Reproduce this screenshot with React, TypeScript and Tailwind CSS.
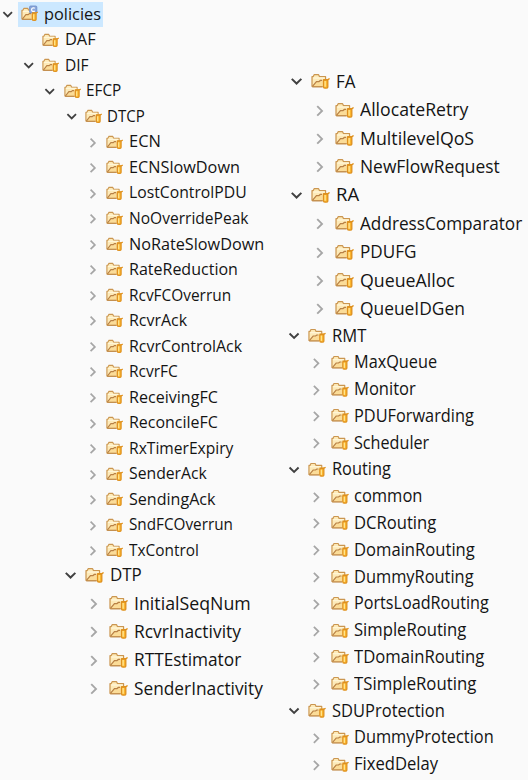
import { useLayoutEffect, useRef, useState } from "react";

type Kind = "open" | "closed" | "none";
type Item = { name: string; level: number; kind: Kind; ink: number };

const n = (name: string, level: number, kind: Kind, ink: number): Item => ({ name, level, kind, ink });

const efcp: Item[] = [
  n("policies", 0, "open", 56),
  n("DAF", 1, "none", 30),
  n("DIF", 1, "open", 23),
  n("EFCP", 2, "open", 34.3),
  n("DTCP", 3, "open", 36.7),
  n("ECN", 4, "closed", 29.3),
  n("ECNSlowDown", 4, "closed", 108.7),
  n("LostControlPDU", 4, "closed", 115.5),
  n("NoOverridePeak", 4, "closed", 118.7),
  n("NoRateSlowDown", 4, "closed", 133),
  n("RateReduction", 4, "closed", 106.7),
  n("RcvFCOverrun", 4, "closed", 100),
  n("RcvrAck", 4, "closed", 57.3),
  n("RcvrControlAck", 4, "closed", 112.3),
  n("RcvrFC", 4, "closed", 48.3),
  n("ReceivingFC", 4, "closed", 88.3),
  n("ReconcileFC", 4, "closed", 88.3),
  n("RxTimerExpiry", 4, "closed", 104),
  n("SenderAck", 4, "closed", 78),
  n("SendingAck", 4, "closed", 86.7),
  n("SndFCOverrun", 4, "closed", 102.7),
  n("TxControl", 4, "closed", 68.7),
];

const dtp: Item[] = [
  n("DTP", 0, "open", 30.7),
  n("InitialSeqNum", 1, "closed", 114.7),
  n("RcvrInactivity", 1, "closed", 106.7),
  n("RTTEstimator", 1, "closed", 106.7),
  n("SenderInactivity", 1, "closed", 129.5),
];

const allocation: Item[] = [
  n("FA", 0, "open", 18.7),
  n("AllocateRetry", 1, "closed", 109),
  n("MultilevelQoS", 1, "closed", 113),
  n("NewFlowRequest", 1, "closed", 139.3),
  n("RA", 0, "open", 22.3),
  n("AddressComparator", 1, "closed", 162.7),
  n("PDUFG", 1, "closed", 55),
  n("QueueAlloc", 1, "closed", 94),
  n("QueueIDGen", 1, "closed", 102.7),
];

const relaying: Item[] = [
  n("RMT", 0, "open", 33.7),
  n("MaxQueue", 1, "closed", 81.3),
  n("Monitor", 1, "closed", 60.7),
  n("PDUForwarding", 1, "closed", 119.3),
  n("Scheduler", 1, "closed", 75),
  n("Routing", 0, "open", 58.3),
  n("common", 1, "closed", 67.7),
  n("DCRouting", 1, "closed", 81.7),
  n("DomainRouting", 1, "closed", 120.3),
  n("DummyRouting", 1, "closed", 119),
  n("PortsLoadRouting", 1, "closed", 134.3),
  n("SimpleRouting", 1, "closed", 112.7),
  n("TDomainRouting", 1, "closed", 130.7),
  n("TSimpleRouting", 1, "closed", 122.7),
  n("SDUProtection", 0, "open", 112),
  n("DummyProtection", 1, "closed", 138),
  n("FixedDelay", 1, "closed", 83.3),
];

function Chevron({ kind }: { kind: Kind }) {
  return (
    <svg viewBox="0 0 16 16" className="h-[1em] w-[1em] shrink-0" fill="none">
      {kind === "open" && <path d="M3.4 6.2 7.7 10.4l4.3-4.2" stroke="#404040" strokeWidth="1.8" />}
      {kind === "closed" && <path d="M5.6 4.6 9.9 8.9 5.6 13.2" stroke="#a6a6a6" strokeWidth="1.7" />}
    </svg>
  );
}

function Folder({ source }: { source: boolean }) {
  return (
    <svg viewBox="0 0 17 16" className="h-[1em] w-[1.0625em] shrink-0 overflow-visible" fill="none">
      <path
        d="M.9 12.9V4.2h1l.9-1.8h4l.9 1.8h5.4v8.7z"
        fill="#fdeab8"
        stroke="#cb9650"
        strokeWidth="1.1"
        strokeLinejoin="round"
      />
      <path d="M2 5.4h10.4" stroke="#fff6d8" strokeWidth="1.2" />
      <path d="M1.5 13.2 4.9 8.6h2.3l1.2-1h4.8v5.6z" fill="#fbdc98" />
      <path d="M1.5 12.8 4.9 8.6h2.3l1.2-1h1.6" stroke="#b98145" strokeWidth="1.1" />
      <path d="M1.1 13.3h9.4" stroke="#c08a48" strokeWidth="1.2" />
      {source && (
        <g>
          <rect x="8.6" y="0" width="7.2" height="7" rx="1" fill="#8ba7da" stroke="#6a89c4" strokeWidth=".8" />
          <path d="M13.8 2.3c-1.4-.9-3.2-.4-3.2 1.4s1.8 2.2 3.2 1.3" stroke="#fff" strokeWidth="1.2" />
        </g>
      )}
      <path
        d="M11 6.9h4.3l1.4-1M11.3 7.2v6.4c0 1.2 3.8 1.2 3.8 0V7.2z"
        fill="#fbb52c"
        stroke="#de901f"
        strokeWidth="1.2"
        strokeLinejoin="round"
      />
      <path d="M12.7 8.2v5" stroke="#ffe48e" strokeWidth="1.3" />
    </svg>
  );
}

/* Condenses the label so that its drawn glyphs span exactly `ink` pixels. */
function Label({ text, ink }: { text: string; ink: number }) {
  const ref = useRef<HTMLSpanElement>(null);
  const [transform, setTransform] = useState("none");
  useLayoutEffect(() => {
    const ctx = document.createElement("canvas").getContext("2d");
    if (!ref.current || !ctx) return;
    const style = getComputedStyle(ref.current);
    ctx.font = `${style.fontSize} ${style.fontFamily}`;
    const m = ctx.measureText(text);
    const scale = ink / (m.actualBoundingBoxRight + m.actualBoundingBoxLeft);
    setTransform(`scaleX(${scale})`);
  }, [text, ink]);
  return (
    <span ref={ref} className="origin-left whitespace-nowrap text-[1.05em]" style={{ transform }}>
      {text}
    </span>
  );
}

const indents = ["pl-0", "pl-[1.325em]", "pl-[2.65em]", "pl-[3.975em]", "pl-[5.3em]"];

function Tree({ items, className }: { items: Item[]; className: string }) {
  return (
    <ul className={className}>
      {items.map((item) => (
        <li key={item.name} className={`flex h-[1.595em] items-center ${indents[item.level]}`}>
          <Chevron kind={item.kind} />
          <div
            className={`ml-[0.13em] flex h-full items-center gap-[0.35em] pl-[0.2em] ${
              item.name === "policies" ? "w-[84.5px] bg-[#cce8ff]" : ""
            }`}
          >
            <Folder source={item.name === "policies"} />
            <Label text={item.name} ink={item.ink} />
          </div>
        </li>
      ))}
    </ul>
  );
}

export default function App() {
  return (
    <main className="flex h-[780px] w-[528px] overflow-hidden bg-[#fafafa] font-['Open_Sans','Noto_Sans',sans-serif] leading-none text-[#141414]">
      <div className="w-[280px] shrink-0 pt-[1.5px]">
        <Tree items={efcp} className="text-[16px]" />
        <Tree items={dtp} className="-mt-[2.5px] pl-[61.5px] text-[17.8px]" />
      </div>
      <div className="min-w-0 flex-1 pt-[67px]">
        <Tree items={allocation} className="pl-[7.5px] text-[17.8px]" />
        <Tree items={relaying} className="-mt-[0.5px] pl-[6px] text-[16.8px]" />
      </div>
    </main>
  );
}
